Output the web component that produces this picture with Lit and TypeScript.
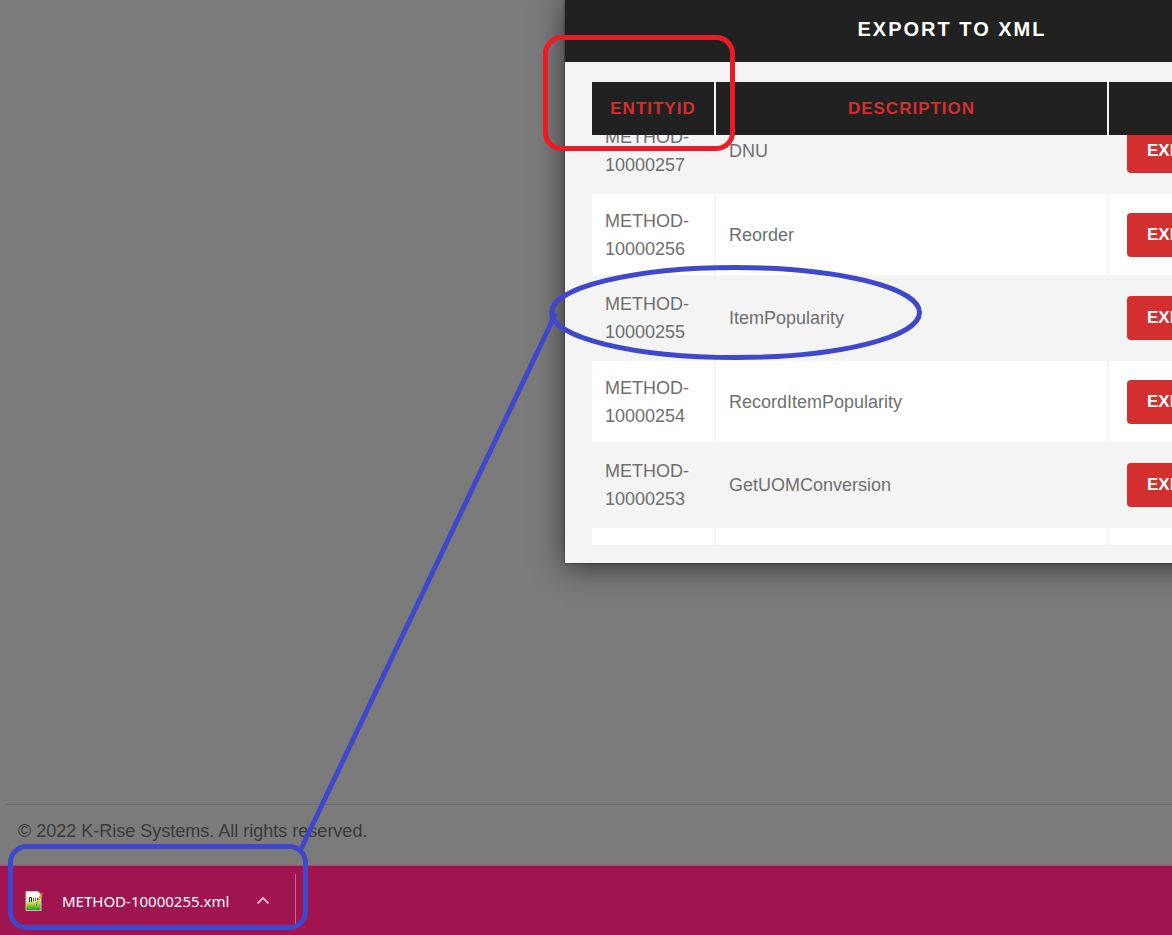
import { LitElement, html, css } from "lit";
import { customElement, property, query } from "lit/decorators.js";

interface Method {
  id: number;
  description: string;
}

const METHODS: Method[] = [
  { id: 10000257, description: "DNU" },
  { id: 10000256, description: "Reorder" },
  { id: 10000255, description: "ItemPopularity" },
  { id: 10000254, description: "RecordItemPopularity" },
  { id: 10000253, description: "GetUOMConversion" },
  { id: 10000252, description: "" },
];

@customElement("export-dialog")
class ExportDialog extends LitElement {
  @property({ attribute: false }) methods: Method[] = [];
  @query(".scroller") scroller!: HTMLElement;

  static styles = css`
    :host {
      display: block;
      box-sizing: border-box;
      width: 774px;
      background: #f4f4f4;
      box-shadow: 0 0 2px rgba(0, 0, 0, 0.6), 0 4px 28px rgba(0, 0, 0, 0.6);
    }
    .title {
      margin: 0;
      padding: 14px 0 18px;
      background: #212121;
      color: #fff;
      font-size: 20px;
      line-height: 30px;
      font-weight: 700;
      letter-spacing: 2px;
      text-align: center;
    }
    .body {
      padding: 20px 25px 18px;
    }
    .scroller {
      height: 463px;
      overflow-y: auto;
      scrollbar-width: none;
    }
    table {
      width: 100%;
      table-layout: fixed;
      border-collapse: separate;
      border-spacing: 2px;
    }
    .col-id {
      width: 122px;
    }
    .col-description {
      width: 391px;
    }
    th {
      position: sticky;
      top: 0;
      z-index: 1;
      height: 53px;
      box-sizing: border-box;
      padding: 0;
      background: #212121;
      color: #d32f2f;
      font-size: 17px;
      letter-spacing: 1px;
    }
    td {
      padding: 13px;
      font-size: 18px;
      line-height: 28px;
      color: #6f6f6f;
      vertical-align: middle;
    }
    tr:nth-child(even) td {
      background: #fff;
      padding-bottom: 12px;
    }
    tr td.action,
    tr:nth-child(even) td.action {
      padding: 0 18px;
    }
    button {
      display: block;
      height: 44px;
      padding: 0 20px;
      border: 0;
      border-radius: 4px;
      background: #d32f2f;
      color: #fff;
      font: 700 17px "Liberation Sans", Arial, sans-serif;
      white-space: nowrap;
    }
  `;

  firstUpdated() {
    this.scroller.scrollTop = 29;
  }

  render() {
    return html`
      <h2 class="title">EXPORT TO XML</h2>
      <div class="body">
        <div class="scroller">
          <table>
            <colgroup>
              <col class="col-id" />
              <col class="col-description" />
              <col />
            </colgroup>
            <thead>
              <tr>
                <th scope="col">ENTITYID</th>
                <th scope="col">DESCRIPTION</th>
                <th></th>
              </tr>
            </thead>
            <tbody>
              ${this.methods.map(
                (m) => html`<tr>
                  <td>METHOD-<br />${m.id}</td>
                  <td>${m.description}</td>
                  <td class="action"><button type="button">EXPORT TO XML</button></td>
                </tr>`
              )}
            </tbody>
          </table>
        </div>
      </div>
    `;
  }
}

@customElement("download-bar")
class DownloadBar extends LitElement {
  @property() file = "";

  static styles = css`
    :host {
      display: flex;
      box-sizing: border-box;
      height: 70px;
      padding: 8px 0 11px 24px;
      background: #a0144f;
      border-top: 1px solid #b24371;
    }
    .item {
      display: flex;
      align-items: center;
      padding: 3px 20px 0 0;
      border-right: 1px solid #c26a90;
      color: #fff;
    }
    .item svg {
      display: block;
    }
    a {
      display: flex;
      align-items: center;
      gap: 18px;
      color: inherit;
      text-decoration: none;
      font: 15px/24px "Noto Sans", "Open Sans", sans-serif;
    }
    button {
      margin-left: 22px;
      padding: 4px;
      border: 0;
      background: none;
    }
  `;

  render() {
    return html`
      <div class="item">
        <a href="#">
          <svg width="20" height="22" viewBox="0 0 20 22" aria-hidden="true">
            <defs>
              <linearGradient id="sheet" x1="0" y1="0" x2="0" y2="1">
                <stop offset="0" stop-color="#fff" />
                <stop offset=".45" stop-color="#eef8dc" />
                <stop offset=".65" stop-color="#a9dc3c" />
                <stop offset="1" stop-color="#219022" />
              </linearGradient>
            </defs>
            <path d="M2 1.500H14L17 4.500V20.500H2Z" fill="url(#sheet)" stroke="#b9c9bd" />
            <path d="M5.500 12V7.500H7.500V12" fill="none" stroke="#222" />
            <path d="M9.500 8V11.500M11.500 8V11M13.500 8V10" fill="none" stroke="#555" />
            <path d="M17.500 4L13 13.500" stroke="#f0a22b" stroke-width="2" />
            <path d="M17 3L19 4" stroke="#a64b3f" stroke-width="2" />
            <path d="M13 13.500L12.200 15.500" stroke="#7a5a28" />
          </svg>
          <span>${this.file}</span>
        </a>
        <button type="button" aria-label="More options">
          <svg width="16" height="16" viewBox="0 0 16 16">
            <path d="M2.500 10.500L8 5L13.500 10.500" fill="none" stroke="#d9b3c4" stroke-width="2" />
          </svg>
        </button>
      </div>
    `;
  }
}

@customElement("app-root")
class AppRoot extends LitElement {
  static styles = css`
    :host {
      position: relative;
      display: flex;
      flex-direction: column;
      min-height: 100vh;
      overflow: hidden;
      background: #7b7b7b;
      font-family: "Liberation Sans", Arial, sans-serif;
    }
    main {
      flex: 1;
      display: grid;
      grid-template-columns: 565fr minmax(0, 607fr);
      align-items: start;
    }
    export-dialog {
      grid-column: 2;
    }
    footer {
      margin-left: 6px;
      padding: 12px 12px 19px;
      border-top: 1px solid #696969;
      color: #3a3a3a;
      font-size: 18px;
      line-height: 29px;
    }
    .marks {
      position: absolute;
      top: 0;
      left: 0;
      z-index: 2;
      pointer-events: none;
      fill: none;
      stroke: #3f48cc;
      stroke-width: 5;
    }
    .alert {
      stroke: #ed1c24;
    }
  `;

  render() {
    return html`
      <main><export-dialog .methods=${METHODS}></export-dialog></main>
      <footer>© 2022 K-Rise Systems. All rights reserved.</footer>
      <download-bar file="METHOD-10000255.xml"></download-bar>
      <svg class="marks" width="1172" height="935" aria-hidden="true">
        <rect class="alert" x="545.500" y="37.500" width="187" height="111" rx="16" />
        <ellipse cx="735.500" cy="312.500" rx="184" ry="45" />
        <path d="M555 315L301 849" stroke-linecap="round" />
        <rect x="10.500" y="846.500" width="295" height="81" rx="16" />
      </svg>
    `;
  }
}
